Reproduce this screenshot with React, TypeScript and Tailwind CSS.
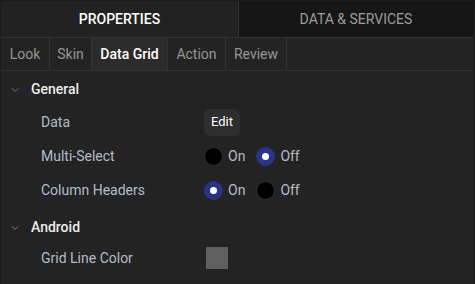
import { ChevronDown } from 'lucide-react';

const SUB_TABS = [
  { label: 'Look', w: 'w-[49px]' },
  { label: 'Skin', w: 'w-[42px]' },
  { label: 'Data Grid', w: 'w-[76px]' },
  { label: 'Action', w: 'w-[58px]' },
  { label: 'Review', w: 'w-[61px]' },
];

function Radio({ checked, label }: { checked: boolean; label: string }) {
  return (
    <label className="mr-[11px] flex items-center gap-[5px]">
      <span
        className={`flex h-[19px] w-[19px] items-center justify-center rounded-full border ${
          checked ? 'border-[#2a3386] bg-[#2a3386]' : 'border-[#2e2e2e] bg-black'
        }`}
      >
        {checked && <span className="h-[7px] w-[7px] rounded-full bg-white" />}
      </span>
      <span className="text-[14px] text-[#b3bcc6]">{label}</span>
    </label>
  );
}

function Row({ label, children }: { label: string; children: React.ReactNode }) {
  return (
    <div className="flex h-[34px] items-center">
      <span className="w-[203px] shrink-0 pl-[40px] text-[14px] text-[#b3bdc8]">{label}</span>
      <div className="flex items-center">{children}</div>
    </div>
  );
}

function Section({ title }: { title: string }) {
  return (
    <div className="flex h-8 items-center gap-[10px] pl-[8px] pt-[1px]">
      <ChevronDown size={12} strokeWidth={1.5} className="text-[#9a9a9a]" />
      <span className="text-[14px] font-medium text-[#ececec]">{title}</span>
    </div>
  );
}

export default function App() {
  return (
    <div
      className="h-[284px] w-[475px] overflow-hidden border-t border-l border-r-2 border-[#1c1c1c] bg-[#232323]"
      style={{ fontFamily: 'Roboto, "Liberation Sans", sans-serif' }}
    >
      <div className="flex h-[37px] border-b border-[#333333]">
        <div className="flex w-[238px] items-center justify-center border-r border-[#333333] bg-[#222222] text-[14px] font-medium text-white">
          PROPERTIES
        </div>
        <div className="flex flex-1 items-center justify-center bg-[#161616] text-[14px] text-[#9c9c9c]">
          DATA &amp; SERVICES
        </div>
      </div>

      <div className="flex h-[33px] border-b border-[#333333]">
        {SUB_TABS.map((t) => (
          <div
            key={t.label}
            className={`flex ${t.w} items-center justify-center border-r border-[#333333] text-[14px] ${
              t.label === 'Data Grid' ? 'bg-[#2b2b2b] font-medium text-white' : 'text-[#979797]'
            }`}
          >
            {t.label}
          </div>
        ))}
      </div>

      <div className="pt-[2px]">
        <Section title="General" />
        <Row label="Data">
          <button className="h-[27px] rounded-md bg-[#2e2e2e] px-[7px] text-[13px] text-white">
            Edit
          </button>
        </Row>
        <Row label="Multi-Select">
          <Radio checked={false} label="On" />
          <Radio checked label="Off" />
        </Row>
        <Row label="Column Headers">
          <Radio checked label="On" />
          <Radio checked={false} label="Off" />
        </Row>
        <div className="mt-[4px]">
          <Section title="Android" />
        </div>
        <div className="flex h-[30px] items-center">
          <span className="w-[203px] shrink-0 pl-[40px] text-[14px] text-[#b3bdc8]">Grid Line Color</span>
          <span className="ml-[2px] h-[22px] w-[22px] bg-[#5f5f5f]" />
        </div>
      </div>
    </div>
  );
}
